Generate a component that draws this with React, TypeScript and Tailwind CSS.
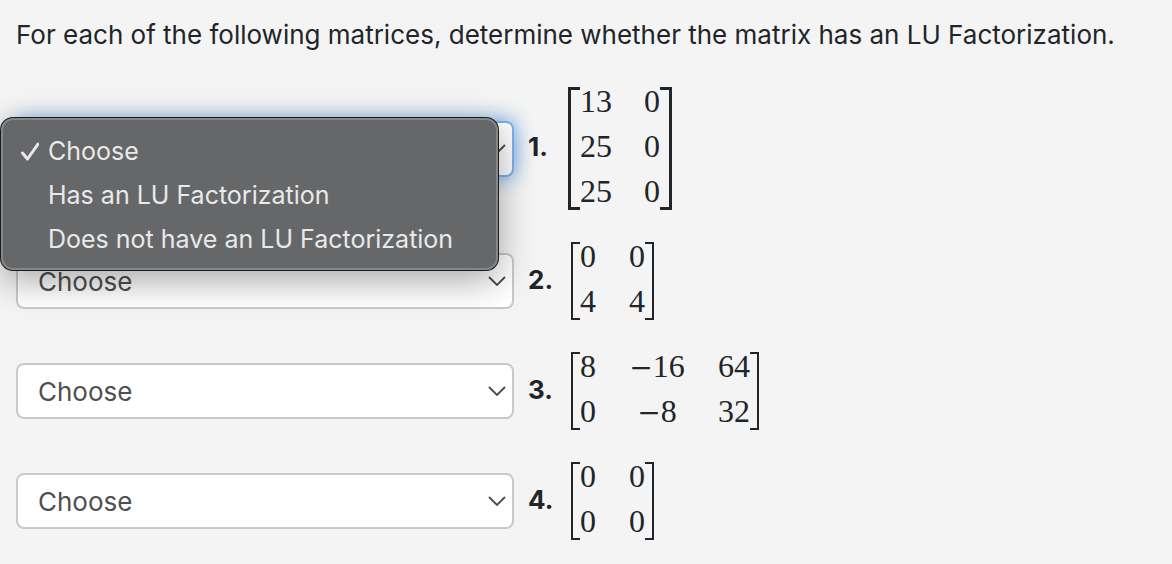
import { useState } from "react";
import clsx from "clsx";

const CHOICES = ["Choose", "Has an LU Factorization", "Does not have an LU Factorization"];

const MATRICES = [
  [
    [13, 0],
    [25, 0],
    [25, 0],
  ],
  [
    [0, 0],
    [4, 4],
  ],
  [
    [8, -16, 64],
    [0, -8, 32],
  ],
  [
    [0, 0],
    [0, 0],
  ],
];

function Entry({ value }: { value: number }) {
  return (
    <td className="p-0 text-center">
      {value < 0 && <span className="font-['DejaVu_Serif',serif] text-[28px] leading-0">−</span>}
      {Math.abs(value)}
    </td>
  );
}

function Matrix({ rows }: { rows: number[][] }) {
  const tall = rows.length > 2;
  return (
    <div className={clsx("flex", !tall && "ml-[3px]")}>
      <div className={clsx("border-r-0 border-[#212529]", tall ? "w-3 border-3" : "w-[9px] border-2")} />
      <table className="mb-[5px] font-['Liberation_Serif',serif] text-[32px] leading-7">
        <tbody className="grid gap-y-[17px]">
          {rows.map((row, i) => (
            <tr
              key={i}
              className={clsx(
                "grid",
                tall ? "gap-x-8" : "gap-x-[33px]",
                row.length === 3 ? "grid-cols-[16px_56px_32px]" : tall ? "grid-cols-[32px_16px]" : "grid-cols-[16px_16px]"
              )}
            >
              {row.map((value, j) => (
                <Entry key={j} value={value} />
              ))}
            </tr>
          ))}
        </tbody>
      </table>
      <div className={clsx("border-l-0 border-[#212529]", tall ? "w-3 border-3" : "w-[9px] border-2")} />
    </div>
  );
}

function Menu({ value, onPick }: { value: string; onPick: (choice: string) => void }) {
  return (
    <div
      role="listbox"
      aria-label="Answer choices"
      className="absolute -top-[3px] -left-[15px] z-10 w-[497px] rounded-xl border-2 border-[#858688] bg-[#666769] pt-2.5 pb-1.5 shadow-[0_0_0_1px_#1c1c1e,0_10px_36px_rgba(0,0,0,0.36)]"
    >
      {CHOICES.map((choice) => (
        <button
          key={choice}
          role="option"
          aria-selected={choice === value}
          onClick={() => onPick(choice)}
          className="flex h-11 w-full items-center pl-4 text-left text-[25px] text-[#e9e9e9]"
        >
          <span className="w-[29px]">
            {choice === value && (
              <svg viewBox="0 0 20 20" className="size-5" fill="none" stroke="currentColor" strokeWidth="3" strokeLinecap="round" strokeLinejoin="round">
                <path d="M3.5 11 8.5 17 19 2" />
              </svg>
            )}
          </span>
          {choice}
        </button>
      ))}
    </div>
  );
}

function Question({ number, rows, startOpen }: { number: number; rows: number[][]; startOpen: boolean }) {
  const [value, setValue] = useState(CHOICES[0]);
  const [open, setOpen] = useState(startOpen);
  const id = `matrix-${number}`;

  return (
    <li className="flex items-center gap-3.5">
      <div className="relative w-[498px]">
        <select
          id={id}
          value={value}
          onChange={(e) => setValue(e.target.value)}
          className={clsx(
            "block h-14 w-full appearance-none rounded-lg border-2 bg-white px-5 text-[26px] text-[#4f4f4f]",
            open ? "border-[#7fb1ea] shadow-[0_0_20px_rgba(80,150,235,0.9)]" : "border-[#c9c9c9]"
          )}
        >
          {CHOICES.map((choice) => (
            <option key={choice}>{choice}</option>
          ))}
        </select>
        <svg
          viewBox="0 0 18 10"
          className="pointer-events-none absolute top-[23px] right-2 h-2.5 w-[18px]"
          fill="none"
          stroke="#4a4a4a"
          strokeWidth="1.8"
        >
          <path d="M1 1 9 9 17 1" />
        </svg>
        {open && (
          <Menu
            value={value}
            onPick={(choice) => {
              setValue(choice);
              setOpen(false);
            }}
          />
        )}
      </div>
      <div className="flex items-center">
        <label htmlFor={id} className="w-10 pb-1 text-[26px] font-bold">
          {number}.
        </label>
        <Matrix rows={rows} />
      </div>
    </li>
  );
}

export default function App() {
  return (
    <main className="min-h-screen bg-[#f4f4f4] px-4 pt-4 font-['Inter',sans-serif] text-[#212529]">
      <p className="text-[26px] leading-[38px]">
        For each of the following matrices, determine whether the matrix has an LU Factorization.
      </p>
      <ol className="mt-[33px] flex flex-col gap-8">
        {MATRICES.map((rows, i) => (
          <Question key={i} number={i + 1} rows={rows} startOpen={i === 0} />
        ))}
      </ol>
    </main>
  );
}
